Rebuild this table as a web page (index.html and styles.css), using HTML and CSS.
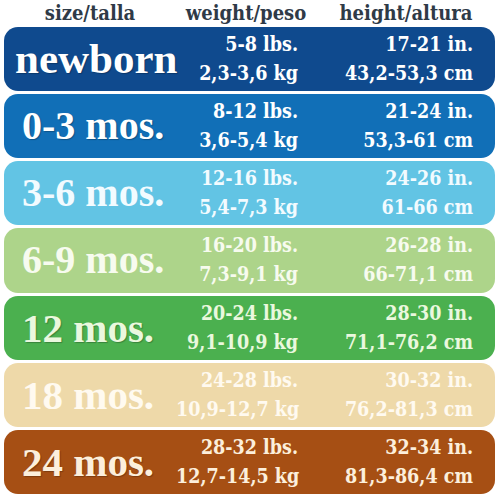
FILE: index.html
```html
<!DOCTYPE html>
<html>
<head>
<meta charset="utf-8">
<link rel="stylesheet" href="styles.css">
</head>
<body>
<div class="chart">
  <div class="head">
    <span>size/talla</span>
    <span>weight/peso</span>
    <span>height/altura</span>
  </div>
  <div class="rows">
    <div class="row nb">
      <div class="size nbl">newborn</div>
      <div class="wt">5-8 lbs.<br>2,3-3,6 kg</div>
      <div class="ht">17-21 in.<br>43,2-53,3 cm</div>
    </div>
    <div class="row m03">
      <div class="size">0-3 mos.</div>
      <div class="wt">8-12 lbs.<br>3,6-5,4 kg</div>
      <div class="ht">21-24 in.<br>53,3-61 cm</div>
    </div>
    <div class="row m36">
      <div class="size">3-6 mos.</div>
      <div class="wt">12-16 lbs.<br>5,4-7,3 kg</div>
      <div class="ht">24-26 in.<br>61-66 cm</div>
    </div>
    <div class="row m69">
      <div class="size">6-9 mos.</div>
      <div class="wt">16-20 lbs.<br>7,3-9,1 kg</div>
      <div class="ht">26-28 in.<br>66-71,1 cm</div>
    </div>
    <div class="row m12">
      <div class="size big">12 mos.</div>
      <div class="wt">20-24 lbs.<br>9,1-10,9 kg</div>
      <div class="ht">28-30 in.<br>71,1-76,2 cm</div>
    </div>
    <div class="row m18">
      <div class="size big">18 mos.</div>
      <div class="wt">24-28 lbs.<br>10,9-12,7 kg</div>
      <div class="ht">30-32 in.<br>76,2-81,3 cm</div>
    </div>
    <div class="row m24">
      <div class="size big">24 mos.</div>
      <div class="wt">28-32 lbs.<br>12,7-14,5 kg</div>
      <div class="ht">32-34 in.<br>81,3-86,4 cm</div>
    </div>
  </div>
</div>
</body>
</html>
```
FILE: styles.css
```css
html, body {
  margin: 0;
  padding: 0;
  background: #ffffff;
}
.chart {
  width: 500px;
  height: 500px;
  display: flex;
  flex-direction: column;
}
.head {
  height: 27px;
  display: grid;
  grid-template-columns: 180px 132px 1fr;
  font-family: "DejaVu Serif Condensed", "DejaVu Serif", serif;
  font-stretch: condensed;
  font-weight: bold;
  font-size: 20px;
  color: #2f3a47;
  line-height: 26px;
}
.head span {
  text-align: center;
}
.rows {
  height: 467px;
  margin: 0 5px 0 4px;
  display: grid;
  grid-template-rows: repeat(7, 1fr);
  row-gap: 3px;
}
.row {
  display: grid;
  grid-template-columns: 172px 122px 1fr;
  align-items: center;
  border-radius: 14px;
  color: #ffffff;
}
.size {
  padding-left: 18px;
  font-family: "Liberation Serif", serif;
  font-weight: bold;
  font-size: 40px;
  line-height: 44px;
  white-space: nowrap;
  text-shadow: 1px 1px 1px rgba(0, 0, 0, 0.25);
}
.size.nbl {
  margin-left: -7px;
  font-size: 43px;
}
.size.big {
  font-size: 41px;
}
.wt, .ht {
  text-align: right;
  font-family: "DejaVu Serif Condensed", "DejaVu Serif", serif;
  font-stretch: condensed;
  font-weight: bold;
  font-size: 19.5px;
  line-height: 29px;
  white-space: nowrap;
}
.ht {
  padding-right: 22px;
}
.nb { background: #0f4a8e; }
.m03 { background: #116fb7; }
.m36 { background: #62c4e4; color: #f2fbff; }
.m69 { background: #add48a; color: #f7fbef; }
.m12 { background: #4bb04f; color: #eaf8de; }
.m18 { background: #eed9a9; color: #fffaf0; }
.m24 { background: #a64f14; color: #fcefdc; }
.m36 .size, .m69 .size, .m18 .size {
  text-shadow: none;
}
```
